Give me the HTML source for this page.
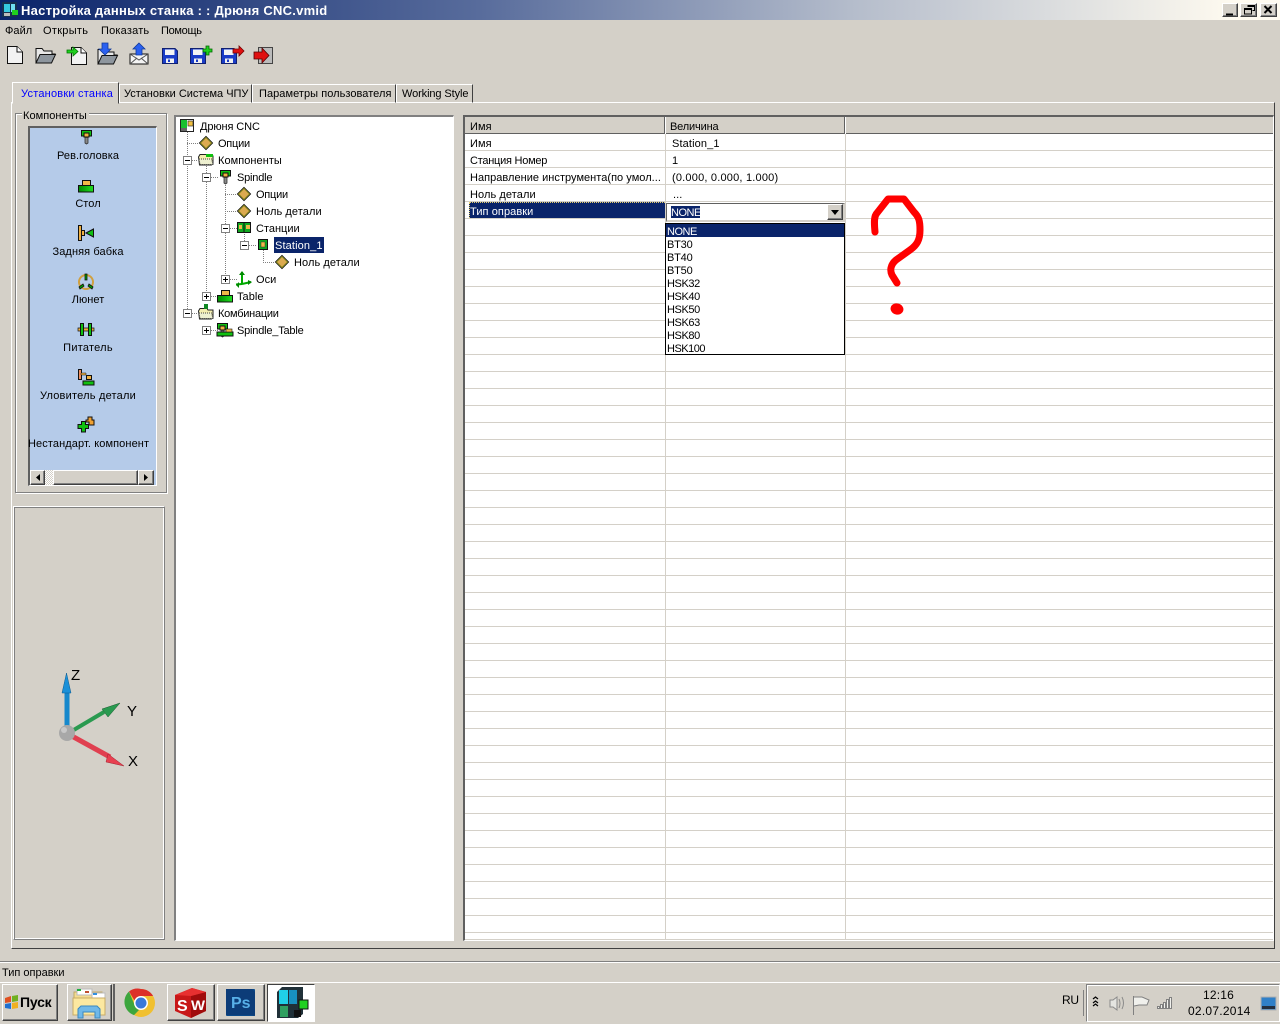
<!DOCTYPE html>
<html lang="ru"><head><meta charset="utf-8"><title>Настройка данных станка</title>
<style>
html,body{margin:0;padding:0;width:1280px;height:1024px;overflow:hidden;background:#d4d0c8}
body{position:relative;font:11px/13px "Liberation Sans","DejaVu Sans",sans-serif;color:#000}
.t{position:absolute;white-space:nowrap;letter-spacing:.05px;margin-top:2px}
.b{position:absolute;box-sizing:border-box}
.btn{position:absolute;box-sizing:border-box;background:#d4d0c8;border:1px solid;border-color:#fff #404040 #404040 #fff;box-shadow:inset -1px -1px 0 #808080}
svg{position:absolute;left:0;top:0}
</style></head><body>
<!-- title -->
<div class="b" style="left:0;top:0;width:1280px;height:20px;background:linear-gradient(90deg,#0a246a 0,#586c9c 480px,#b4bccb 850px,#fffbf0 1240px)"></div>
<div class="t" style="left:21px;top:1px;font-size:13px;line-height:16px;font-weight:bold;color:#fff;letter-spacing:.25px">Настройка данных станка : : Дрюня CNC.vmid</div>
<div class="btn" style="left:1222px;top:3px;width:16px;height:14px"></div>
<div class="btn" style="left:1240px;top:3px;width:17px;height:14px"></div>
<div class="btn" style="left:1260px;top:3px;width:17px;height:14px"></div>
<!-- menu -->
<div class="t" style="left:5px;top:23px">Файл</div>
<div class="t" style="left:43px;top:23px;letter-spacing:.3px">Открыть</div>
<div class="t" style="left:101px;top:23px;letter-spacing:.2px">Показать</div>
<div class="t" style="left:161px;top:23px;letter-spacing:-.3px">Помощь</div>
<!-- pane -->
<div class="b" style="left:11px;top:102px;width:1264px;height:847px;border:1px solid;border-color:#fff #404040 #404040 #fff"></div>
<!-- tabs -->
<div class="b" style="left:119px;top:84px;width:133px;height:19px;border:1px solid;border-color:#fff #404040 #fff #fff"></div>
<div class="b" style="left:252px;top:84px;width:144px;height:19px;border:1px solid;border-color:#fff #404040 #fff #fff"></div>
<div class="b" style="left:396px;top:84px;width:77px;height:19px;border:1px solid;border-color:#fff #404040 #fff #fff"></div>
<div class="b" style="left:12px;top:82px;width:107px;height:22px;background:#d4d0c8;border:1px solid;border-color:#fff #404040 #d4d0c8 #fff"></div>
<div class="t" style="left:21px;top:86px;color:#0000ff;letter-spacing:.22px">Установки станка</div>
<div class="t" style="left:124px;top:86px;letter-spacing:0">Установки Система ЧПУ</div>
<div class="t" style="left:259px;top:86px;letter-spacing:.05px">Параметры пользователя</div>
<div class="t" style="left:402px;top:86px;letter-spacing:-.1px">Working Style</div>
<!-- group -->
<div class="b" style="left:15px;top:113px;width:152px;height:380px;border:1px solid #808080;box-shadow:inset 1px 1px 0 #fff,1px 1px 0 #fff"></div>
<div class="b" style="left:22px;top:108px;width:67px;height:13px;background:#d4d0c8"></div>
<div class="t" style="left:23px;top:108px">Компоненты</div>
<!-- list -->
<div class="b" style="left:28px;top:126px;width:129px;height:360px;background:#b5cbe9;border:1px solid;border-color:#606060 #fff #fff #606060;border-width:2px 1px 1px 2px"></div>
<div class="t" style="left:30px;width:116px;top:148px;text-align:center;letter-spacing:.08px">Рев.головка</div>
<div class="t" style="left:30px;width:116px;top:196px;text-align:center">Стол</div>
<div class="t" style="left:30px;width:116px;top:244px;text-align:center;letter-spacing:.1px">Задняя бабка</div>
<div class="t" style="left:30px;width:116px;top:292px;text-align:center">Люнет</div>
<div class="t" style="left:30px;width:116px;top:340px;text-align:center;letter-spacing:.25px">Питатель</div>
<div class="t" style="left:30px;width:116px;top:388px;text-align:center;letter-spacing:.22px">Уловитель детали</div>
<div class="t" style="left:28px;top:436px;letter-spacing:.1px">Нестандарт. компонент</div>
<!-- scrollbar -->
<div class="b" style="left:30px;top:470px;width:124px;height:15px;background:repeating-conic-gradient(#fff 0 25%,#d4d0c8 0 50%) 0 0/2px 2px"></div>
<div class="btn" style="left:30px;top:470px;width:15px;height:15px"></div>
<div class="btn" style="left:53px;top:470px;width:85px;height:15px"></div>
<div class="btn" style="left:138px;top:470px;width:16px;height:15px"></div>
<!-- axis panel -->
<div class="b" style="left:13px;top:506px;width:152px;height:434px;border:1px solid;border-color:#fff #808080 #808080 #fff;box-shadow:inset 1px 1px 0 #808080,inset -1px -1px 0 #fff"></div>
<div class="t" style="left:71px;top:666px;font-size:15px;line-height:16px;letter-spacing:0">Z</div>
<div class="t" style="left:127px;top:702px;font-size:15px;line-height:16px;letter-spacing:0">Y</div>
<div class="t" style="left:128px;top:752px;font-size:15px;line-height:16px;letter-spacing:0">X</div>
<!-- tree -->
<div class="b" style="left:174px;top:115px;width:280px;height:826px;background:#fff;border:1px solid;border-color:#808080 #fff #fff #808080;border-width:2px 1px 1px 2px"></div>
<div class="b" style="left:274px;top:237px;width:50px;height:16px;background:#0a246a"></div>
<div class="t" style="left:200px;top:119px;letter-spacing:-.1px">Дрюня CNC</div>
<div class="t" style="left:218px;top:136px;letter-spacing:-.25px">Опции</div>
<div class="t" style="left:218px;top:153px">Компоненты</div>
<div class="t" style="left:237px;top:170px;letter-spacing:-.2px">Spindle</div>
<div class="t" style="left:256px;top:187px;letter-spacing:-.25px">Опции</div>
<div class="t" style="left:256px;top:204px;letter-spacing:.08px">Ноль детали</div>
<div class="t" style="left:256px;top:221px;letter-spacing:0">Станции</div>
<div class="t" style="left:275px;top:238px;color:#fff;letter-spacing:.13px">Station_1</div>
<div class="t" style="left:294px;top:255px;letter-spacing:.08px">Ноль детали</div>
<div class="t" style="left:256px;top:272px">Оси</div>
<div class="t" style="left:237px;top:289px">Table</div>
<div class="t" style="left:218px;top:306px;letter-spacing:-.25px">Комбинации</div>
<div class="t" style="left:237px;top:323px;letter-spacing:-.2px">Spindle_Table</div>
<!-- table -->
<div class="b" style="left:463px;top:115px;width:811px;height:826px;background:#fff;border:1px solid;border-color:#606060 #fff #fff #606060;border-width:2px 1px 1px 2px"></div>
<div class="b" style="left:465px;top:117px;width:808px;height:17px;background:#d4d0c8;border-bottom:1px solid #606060"></div>
<div class="b" style="left:664px;top:117px;width:2px;height:17px;background:linear-gradient(90deg,#606060 50%,#fff 50%)"></div>
<div class="b" style="left:844px;top:117px;width:2px;height:17px;background:linear-gradient(90deg,#606060 50%,#fff 50%)"></div>
<div class="b" style="left:665px;top:134px;width:1px;height:805px;background:#d4d0c8"></div>
<div class="b" style="left:845px;top:134px;width:1px;height:805px;background:#d4d0c8"></div>
<div class="b" style="left:465px;top:134px;width:808px;height:805px;background:repeating-linear-gradient(180deg,#0000 0,#0000 16px,#d4d0c8 16px,#d4d0c8 17px)"></div>
<div class="b" style="left:465px;top:939px;width:808px;height:1px;background:#d4d0c8"></div>
<div class="t" style="left:470px;top:119px">Имя</div>
<div class="t" style="left:670px;top:119px;letter-spacing:-.15px">Величина</div>
<div class="t" style="left:470px;top:136px">Имя</div><div class="t" style="left:672px;top:136px;letter-spacing:.13px">Station_1</div>
<div class="t" style="left:470px;top:153px;letter-spacing:-.25px">Станция Номер</div><div class="t" style="left:672px;top:153px">1</div>
<div class="t" style="left:470px;top:170px;letter-spacing:.03px">Направление инструмента(по умол...</div><div class="t" style="left:672px;top:170px;letter-spacing:.2px">(0.000, 0.000, 1.000)</div>
<div class="t" style="left:470px;top:187px;letter-spacing:.08px">Ноль детали</div><div class="t" style="left:673px;top:187px">...</div>
<div class="b" style="left:469px;top:202px;width:196px;height:16px;background:#0a246a;border-top:1px dotted #e8d070;border-left:1px dotted #e8d070"></div>
<div class="t" style="left:470px;top:204px;color:#fff;letter-spacing:.08px">Тип оправки</div>
<!-- combo -->
<div class="b" style="left:666px;top:203px;width:179px;height:19px;background:#fff;border:1px solid;border-color:#606060 #d4d0c8 #d4d0c8 #606060;border-width:1px 2px 2px 1px"></div>
<div class="b" style="left:671px;top:206px;width:29px;height:12px;background:#0a246a"></div>
<div class="t" style="left:671px;top:205px;color:#fff;letter-spacing:-.5px">NONE</div>
<div class="btn" style="left:827px;top:204px;width:16px;height:16px"></div>
<div class="b" style="left:665px;top:223px;width:180px;height:132px;background:#fff;border:1px solid #000"></div>
<div class="b" style="left:666px;top:224px;width:178px;height:13px;background:#0a246a"></div>
<div class="t" style="left:667px;top:224px;color:#fff;letter-spacing:-.5px">NONE</div>
<div class="t" style="left:667px;top:237px;letter-spacing:-.2px">BT30</div>
<div class="t" style="left:667px;top:250px;letter-spacing:-.2px">BT40</div>
<div class="t" style="left:667px;top:263px;letter-spacing:-.2px">BT50</div>
<div class="t" style="left:667px;top:276px;letter-spacing:-.4px">HSK32</div>
<div class="t" style="left:667px;top:289px;letter-spacing:-.4px">HSK40</div>
<div class="t" style="left:667px;top:302px;letter-spacing:-.4px">HSK50</div>
<div class="t" style="left:667px;top:315px;letter-spacing:-.4px">HSK63</div>
<div class="t" style="left:667px;top:328px;letter-spacing:-.4px">HSK80</div>
<div class="t" style="left:667px;top:341px;letter-spacing:-.5px">HSK100</div>
<!-- status -->
<div class="b" style="left:0;top:961px;width:1280px;height:1px;background:#808080"></div>
<div class="b" style="left:0;top:962px;width:1280px;height:1px;background:#fff"></div>
<div class="t" style="left:2px;top:965px;letter-spacing:0">Тип оправки</div>
<div class="b" style="left:0;top:982px;width:1280px;height:1px;background:#fff"></div>
<!-- taskbar -->
<div class="btn" style="left:2px;top:984px;width:56px;height:37px"></div>
<div class="t" style="left:20px;top:992px;font-size:14px;line-height:16px;font-weight:bold;letter-spacing:-.2px">Пуск</div>
<div class="btn" style="left:67px;top:984px;width:45px;height:37px"></div>
<div class="b" style="left:113px;top:984px;width:2px;height:37px;background:#606060"></div>
<div class="btn" style="left:167px;top:984px;width:48px;height:37px"></div>
<div class="btn" style="left:217px;top:984px;width:48px;height:37px"></div>
<div class="b" style="left:267px;top:984px;width:48px;height:38px;background:#fff;border:1px solid;border-color:#404040 #fff #fff #404040"></div>
<div class="b" style="left:1083px;top:990px;width:1px;height:26px;background:#808080"></div>
<div class="b" style="left:1086px;top:984px;width:194px;height:38px;border:1px solid;border-color:#808080 #fff #fff #808080;box-shadow:inset 1px 1px 0 #fff"></div>
<div class="t" style="left:1062px;top:992px;font-size:12px;letter-spacing:-.3px">RU</div>
<div class="t" style="left:1203px;top:987px;font-size:12px;letter-spacing:.2px">12:16</div>
<div class="t" style="left:1188px;top:1003px;font-size:12px;letter-spacing:.25px">02.07.2014</div>

<svg width="1280" height="1024" viewBox="0 0 1280 1024" xmlns="http://www.w3.org/2000/svg">
<defs>
<linearGradient id="g" x1="0" x2="1"><stop offset="0" stop-color="#008a00"/><stop offset="1" stop-color="#20e020"/></linearGradient>
<symbol id="diamond" overflow="visible"><path d="M7 0.5L13.5 7 7 13.5 .5 7Z" fill="#dcaa50" stroke="#111" stroke-width="1"/><path d="M7 1.5L12.5 7 7 12.5 1.5 7Z" fill="none" stroke="#8a8a20" stroke-width="1"/></symbol>
<symbol id="spindle" overflow="visible"><path d="M.5.5H10.5V6H.5Z" fill="#10c010" stroke="#111"/><path d="M3 3H8V7H3Z" fill="#f0b040" stroke="#111"/><path d="M4 7.5H7V13L5.5 14 4 13Z" fill="#888" stroke="#333" stroke-width=".8"/></symbol>
<symbol id="table" overflow="visible"><path d="M4.500.5H12.500V5.500H4.500Z" fill="#f0b848" stroke="#111"/><path d="M.5 5.500H15.500V12H.5Z" fill="url(#g)" stroke="#111"/></symbol>
<symbol id="folder" overflow="visible"><path d="M.5 4L2 1.500H9L10 3H15V10.500L13.500 12H1.500Z" fill="#f4eeb0" stroke="#222"/><path d="M1 6H13.500L15 11.500H2Z" fill="#eef0d0" stroke="#444" stroke-dasharray="1 1"/></symbol>
<symbol id="floppy" overflow="visible"><path d="M.5.5H13L15.500 3V15.500H.5Z" fill="#1a3cc8" stroke="#102070"/><path d="M3 1.500H12.500V7H3Z" fill="#f4f4f4"/><path d="M4 10.500H12V15H4Z" fill="#f0f0f0"/><path d="M6 11.500H8V14H6Z" fill="#1a3cc8"/></symbol>
<symbol id="fold2" overflow="visible"><path d="M1 3.500H7L9 6H17V9H20L16 18H1Z" fill="#e8e8e8" stroke="#111"/><path d="M1 18L5 9.500H20.500L16.500 18Z" fill="#8e969e" stroke="#111"/></symbol>
<symbol id="doc" overflow="visible"><path d="M.5.5H10L15.500 6V17.500H.5Z" fill="#f2f2f2" stroke="#111"/><path d="M10 .5V6H15.500" fill="#fff" stroke="#111"/></symbol>
</defs>
<!-- window control glyphs -->
<path d="M1226 13.500h7v2h-7z" fill="#000"/>
<path d="M1247.500 5.500h7v5h-2M1247.500 6.500h7M1244.500 8.500h7v5.500h-7zM1244.500 9.500h7" fill="none" stroke="#000"/>
<path d="M1264.500 6l7 7M1271.500 6l-7 7" stroke="#000" stroke-width="2" fill="none"/>
<!-- app icon -->
<g><rect x="2" y="2" width="15" height="15" fill="#16304e"/><rect x="4" y="4" width="6" height="8" fill="#35c8e0"/><rect x="11" y="4" width="4" height="8" fill="#70e0f0"/><rect x="4" y="13" width="6" height="3" fill="#bbb"/><rect x="12" y="10" width="6" height="5" fill="#20d020"/></g>
<!-- toolbar -->
<use href="#doc" x="7" y="46"/>
<use href="#fold2" x="35" y="45"/>
<use href="#doc" x="71" y="47"/><path d="M67 50h6v-3l5 4.500-5 4.500v-3h-6z" fill="#20d020" stroke="#070" stroke-width=".8"/>
<use href="#fold2" x="97" y="46"/><path d="M102 43h6v6h3l-6 6-6-6h3z" fill="#2a60f0" stroke="#123a9a" stroke-width=".8"/>
<path d="M130 54H148V64H130Z" fill="#f4f4f4" stroke="#111"/><path d="M130 54L139 60 148 54M130 64L137 58M148 64L141 58" fill="none" stroke="#555"/><path d="M139 43l6 6h-3v6h-6v-6h-3z" fill="#2a60f0" stroke="#123a9a" stroke-width=".8"/>
<use href="#floppy" x="162" y="48"/>
<use href="#floppy" x="190" y="48"/><path d="M206 46h3v3h3v3h-3v3h-3v-3h-3v-3h3z" fill="#20d020" stroke="#060" stroke-width=".8"/>
<use href="#floppy" x="221" y="48"/><path d="M233 49h6v-3l5 5-5 5v-3h-6z" fill="#e01010" stroke="#700" stroke-width=".8"/>
<path d="M258.500 47.500H272.500V63.500H258.500Z" fill="#bbb" stroke="#444"/><path d="M254 52h8v-4l7 7.500-7 7.500v-4h-8z" fill="#e01010" stroke="#500" stroke-width=".8"/>
<!-- component icons -->
<use href="#spindle" x="81" y="130"/>
<use href="#table" x="78" y="180"/>
<g><rect x="78.500" y="225.500" width="3" height="15" fill="#f0b040" stroke="#111"/><rect x="81.500" y="230.500" width="3" height="5" fill="#f0b040" stroke="#111"/><path d="M86 233L93.500 229V237Z" fill="#10c010" stroke="#111"/></g>
<g><circle cx="86" cy="282" r="7" fill="none" stroke="#d0a040" stroke-width="2"/><path d="M85 274h2v6h-2zM79 287l4-3 1 2-4 3zM93 287l-4-3-1 2 4 3z" fill="#0a0" stroke="#111" stroke-width=".8"/></g>
<g><path d="M78 328H94V331H78Z" fill="#f0b040" stroke="#111" stroke-width=".7"/><rect x="80.500" y="323.500" width="3" height="12" fill="#10c010" stroke="#111"/><rect x="88.500" y="323.500" width="3" height="12" fill="#10c010" stroke="#111"/></g>
<g><path d="M78.500 369.500h3v10h-3z" fill="#f09060" stroke="#111"/><path d="M81 373h5v2h-5z" fill="#f0b040" stroke="#111" stroke-width=".5"/><rect x="86.500" y="375.500" width="5" height="4" fill="#f0b040" stroke="#111"/><rect x="83" y="381" width="11" height="4" fill="#10c010" stroke="#111"/></g>
<g><path d="M86 420h2v-3h4v3h2v5h-5v-3h-3z" fill="#f0a030" stroke="#111"/><path d="M81.500 421.500h4v3h3v4h-3v3.500h-4v-3.500h-3.500v-4h3.500z" fill="#10c010" stroke="#111"/></g>
<!-- scroll arrows -->
<path d="M40 474v7l-4-3.500zM144 474v7l4-3.500z" fill="#000"/>
<!-- axis -->
<g><path d="M67 733V692" stroke="#1688cc" stroke-width="5"/><path d="M66.500 673L62 693H71Z" fill="#1a90d8" stroke="#0a5a90" stroke-width=".5"/>
<path d="M72 731L104 712" stroke="#2a9a50" stroke-width="4"/><path d="M120 703L102 709 108 717Z" fill="#2a9a50" stroke="#1a5a30" stroke-width=".5"/>
<path d="M70 735L110 757" stroke="#e04050" stroke-width="5"/><path d="M124 766L108 754 106 762Z" fill="#e84050" stroke="#a02030" stroke-width=".5"/>
<circle cx="67" cy="733" r="8" fill="#a8a8a8"/><circle cx="64" cy="730" r="3" fill="#c8c8c8"/></g>
<!-- tree lines -->
<g stroke="#808080" stroke-dasharray="1 1" fill="none">
<path d="M187.500 132V313M206.500 166V296M225.500 183V279M244.500 234V245M263.500 250V262"/>
<path d="M187 143.500H199M192 160.500H198M211 177.500H219M225 194.500H237M225 211.500H237M230 228.500H237M249 245.500H256M263 262.500H275M230 279.500H237M211 296.500H218M192 313.500H198M211 330.500H218"/>
</g>
<!-- expanders -->
<g fill="#fff" stroke="#808080">
<rect x="183.500" y="156.500" width="8" height="8"/><rect x="202.500" y="173.500" width="8" height="8"/><rect x="221.500" y="224.500" width="8" height="8"/><rect x="240.500" y="241.500" width="8" height="8"/><rect x="221.500" y="275.500" width="8" height="8"/><rect x="202.500" y="292.500" width="8" height="8"/><rect x="183.500" y="309.500" width="8" height="8"/><rect x="202.500" y="326.500" width="8" height="8"/>
</g>
<path d="M185 160.500h5M204 177.500h5M223 228.500h5M242 245.500h5M223 279.500h5M204 296.500h5M185 313.500h5M204 330.500h5M225.500 277v5M206.500 294v5M206.500 328v5" stroke="#000" fill="none"/>
<!-- tree icons -->
<g><rect x="180.500" y="119.500" width="13" height="12" fill="#fff" stroke="#222"/><rect x="181" y="120" width="6" height="8" fill="#18c030"/><rect x="188" y="121" width="5" height="5" fill="#f0c040" stroke="#333" stroke-width=".7"/><rect x="181" y="128" width="6" height="3" fill="#666"/></g>
<use href="#diamond" x="199" y="136"/>
<use href="#folder" x="198" y="153"/><rect x="206" y="154" width="7" height="3" fill="#10c010"/>
<use href="#spindle" x="220" y="170"/>
<use href="#diamond" x="237" y="187"/>
<use href="#diamond" x="237" y="204"/>
<g><rect x="237.500" y="222.500" width="13" height="10" fill="#10a820" stroke="#111"/><path d="M244 222v10" stroke="#111"/><rect x="239" y="225" width="3" height="4" fill="#f0b848"/><rect x="246" y="225" width="4" height="4" fill="#f0b848"/></g>
<g><rect x="258.500" y="239.500" width="9" height="10" fill="#10a820" stroke="#111"/><rect x="261" y="242" width="4" height="5" fill="#f0b848" stroke="#333" stroke-width=".5"/></g>
<use href="#diamond" x="275" y="255"/>
<path d="M242 272V284M242 284L236 284.500M242 284L251 282" stroke="#0a0" stroke-width="2" fill="none"/><path d="M242 271l-3 4h6zM236 285l3-3v6zM252 282l-4-2v5z" fill="#080"/>
<use href="#table" x="217" y="290"/>
<use href="#folder" x="198" y="307"/><rect x="204" y="304" width="4" height="5" fill="#118822"/>
<use href="#spindle" x="217" y="323"/><path d="M217 332H233V336H217Z" fill="#10c010" stroke="#111"/><rect x="226" y="329" width="6" height="3" fill="#f0b848" stroke="#111" stroke-width=".6"/>
<!-- combo arrow -->
<path d="M831 210H839L835 215Z" fill="#000"/>
<!-- red question mark -->
<path d="M875 232C874 222 874 216 877 213L888 199H904L914 212C919 217 920 221 920 230 920 240 917 245 910 250L896 260C890 265 890 271 892 275L897 283" fill="none" stroke="#ff0000" stroke-width="7" stroke-linecap="round" stroke-linejoin="round"/>
<ellipse cx="897" cy="309" rx="6.500" ry="5.500" fill="#ff0000" transform="rotate(15 897 309)"/>
<!-- start flag -->
<g><path d="M5 998l6-2v6l-6 1z" fill="#e05020"/><path d="M12 996l6-1v6l-6 1z" fill="#70b020"/><path d="M5 1004l6-1v6l-6-1z" fill="#2070d0"/><path d="M12 1003l6-1v6l-6 1z" fill="#f0b020"/></g>
<!-- folder task -->
<g><path d="M74 992H102V1013H74Z" fill="#f4dc90" stroke="#c0a868"/><rect x="77" y="989" width="15" height="6" fill="#fff" stroke="#bbb"/><rect x="92" y="993" width="13" height="6" fill="#fff" stroke="#bbb"/><rect x="77" y="989" width="4" height="2" fill="#20b040"/><rect x="85" y="991" width="4" height="2" fill="#c05030"/><rect x="93" y="993" width="4" height="2" fill="#3090e0"/><path d="M73 998H105V1015H73Z" fill="#fce8a0" stroke="#c8ac68"/><path d="M78 1018V1009L81 1006H97L100 1009V1018H95V1012H83V1018Z" fill="#70b8e8" stroke="#3a88c0"/></g>
<!-- chrome -->
<g><circle cx="141" cy="1003" r="14" fill="#f0c030"/><path d="M141 989A14 14 0 0 1 153.100 996H141A7 7 0 0 0 134.500 1000.500L129 991.500A14 14 0 0 1 141 989Z" fill="#dc3028"/><path d="M129 991.500L135 1006A7 7 0 0 0 139 1010L134 1015.100A14 14 0 0 1 129 991.500Z" fill="#3da63d"/><circle cx="141" cy="1003" r="7" fill="#fff"/><circle cx="141" cy="1003" r="5.500" fill="#3a78d8"/></g>
<!-- SW -->
<g><path d="M175 995L192 988 206 992V1011L191 1018 175 1011Z" fill="#c81818"/><path d="M191 996L206 992V1011L191 1018Z" fill="#a00c0c"/><path d="M175 995L192 988 206 992 191 996Z" fill="#e83030"/></g>
<text x="177" y="1011" font-family="Liberation Sans" font-size="16" font-weight="bold" fill="#fff">S</text>
<text x="191" y="1010" font-family="Liberation Sans" font-size="14" font-weight="bold" fill="#fff" textLength="14" lengthAdjust="spacingAndGlyphs">W</text>
<!-- PS -->
<rect x="226" y="989" width="29" height="27" rx="1" fill="#0a4a8a"/><path d="M226 989h26l3 3v24l-3-1H226z" fill="#0c3c78"/>
<text x="231" y="1008" font-family="Liberation Sans" font-size="16" font-weight="bold" fill="#58b0e8">Ps</text>
<!-- app task icon -->
<g><path d="M277 992L282 987H303V1014L298 1018H277Z" fill="#203038"/><rect x="279" y="990" width="9" height="14" fill="#20d0e8"/><rect x="289" y="990" width="8" height="14" fill="#1890c0"/><rect x="280" y="1006" width="8" height="11" fill="#30a060"/><rect x="299" y="1000" width="9" height="9" fill="#20d020" stroke="#111"/><rect x="294" y="1010" width="7" height="7" fill="#111"/></g>
<!-- tray -->
<path d="M1093 999l2.500-2 2.500 2M1093 1003l2.500-2 2.500 2M1093 1006l2.500-2 2.500 2" stroke="#000" fill="none" stroke-width="1.200"/>
<g fill="none" stroke="#8a8a8a"><path d="M1110 1000h3l4-3v13l-4-3h-3z" fill="#e4e4e0"/><path d="M1119 999q2 4.500 0 9M1122 997q3 6 0 12"/></g>
<path d="M1133.500 996V1015M1134 997H1142L1149 1000 1147 1005 1139 1005 1134 1006" fill="#f0f0ec" stroke="#808080"/>
<g fill="#f0f0ec" stroke="#808080"><rect x="1157.500" y="1006.500" width="2" height="2"/><rect x="1160.500" y="1004.500" width="2" height="4"/><rect x="1163.500" y="1002.500" width="2" height="6"/><rect x="1166.500" y="999.500" width="2" height="9"/><rect x="1169.500" y="997.500" width="2" height="11"/></g>
<rect x="1261" y="997" width="15" height="13" fill="#3080c8" stroke="#b0b0b0"/><rect x="1262" y="1006" width="13" height="3" fill="#243040"/>
</svg>
</body></html>
